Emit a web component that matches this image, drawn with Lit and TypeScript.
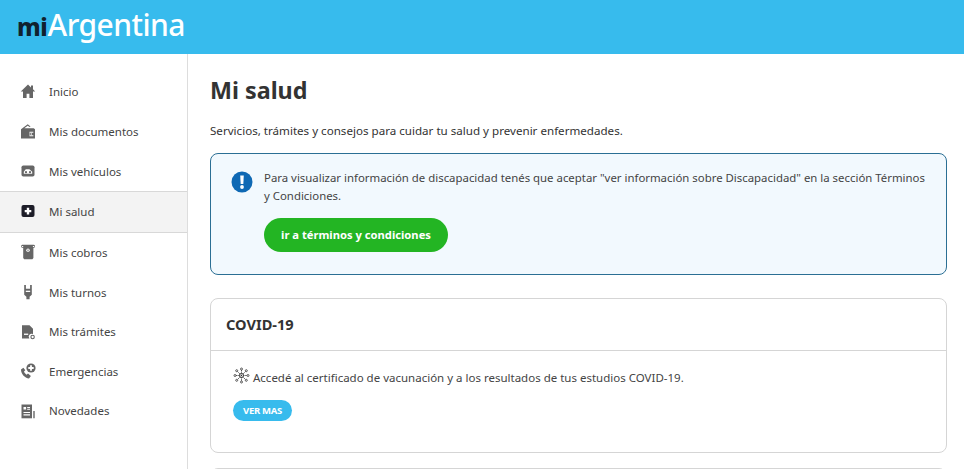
import { LitElement, html, css, svg } from "lit";
import { customElement } from "lit/decorators.js";

const icons: Record<string, unknown> = {
  home: svg`<path d="M8 1.500 .8 8.400h2.200V15h3.600v-4.300h2.800V15H13V8.400h2.200L13 6.300V2.500h-2v1.900z"/>`,
  docs: svg`<path d="M1 6.200 7.700 1.200l2.900 2.200-1 .7-1.900-1.400L4.300 5.200h9.400l1.300 1v9.300H1z"/><path fill="#fff" d="M9.500 8.800h3.800v.9H9.900v2.600h3.400v.9H9.500z"/><circle cx="11.300" cy="11" r=".8" fill="#fff"/>`,
  car: svg`<rect x="1.500" y="2.500" width="13" height="11" rx="1.800"/><path fill="#fff" d="M3.800 10.800V8.700l2-2.400h3.600l2.800 2.400v2.100z"/><circle cx="6" cy="9.200" r="1.100"/><circle cx="10" cy="9.200" r="1.100"/>`,
  health: svg`<rect x="1.500" y="2" width="13" height="12" rx="2"/><path fill="#fff" d="M6.800 4.800h2.400v2.100h2.100v2.400H9.200v2.100H6.800V9.300H4.700V6.900h2.100z"/>`,
  cash: svg`<path d="M3 .8h10.500A1.500 1.500 0 0 1 15 2.400c0 .9-.6 1.400-1.600 1.400V14l-1 1.200H4.200L3.200 14V3.800C1.900 3.800 1 3.300 1 2.400 1 1.500 1.800.8 3 .8z"/><path fill="#fff" d="M1.800 2.100h1.400v.9H1.800zM12.900 2.100h1.400v.9h-1.400z"/><circle cx="8" cy="6.300" r="1.700" fill="#fff"/><path d="M7.500 5.400h1v1.800h-1z"/>`,
  turns: svg`<path d="M4.200 1h1.700v3.800h4.200V1h1.700v9.800L9.600 12.800V15.300H6.400V12.800L4.200 10.800z"/><path fill="#fff" d="M5.800 6.700h4.400v1.300H5.800z"/>`,
  proc: svg`<path d="M2 1.200h7.500L13 4.700V10a3 3 0 0 0-3.600 4.600H2z"/><path fill="#fff" d="M4 9.600h4.200v1.300H4z"/><circle cx="12.600" cy="13" r="1.700" fill="none" stroke="#666" stroke-width="1.100"/>`,
  emerg: svg`<path d="M3.400 4.800 1 6.600c-.2 4 3.800 8.800 8 9l1.900-2.500-2.900-2.500-1.400 1.100c-1.100-.7-2.200-2-2.600-3.200l1.300-1.200z"/><circle cx="11" cy="5" r="4.600"/><path fill="#fff" d="M10.100 2.300h1.800v1.800h1.800v1.800h-1.800v1.800h-1.800V5.900H8.300V4.100h1.800z"/>`,
  news: svg`<path d="M1.500 1.500h10.500v13.800H1.500z"/><path fill="#fff" d="M3.500 4h2.600v2.600H3.500zM7.200 4H10v1H7.200zM7.200 5.800H10v1H7.200zM3.500 9H10v1.100H3.500zM3.500 11.300H10v1.100H3.500z"/><path d="M13.300 8h1.400v7.300h-1.400z"/>`,
};

const nav = [
  ["home", "Inicio"],
  ["docs", "Mis documentos"],
  ["car", "Mis vehículos"],
  ["health", "Mi salud"],
  ["cash", "Mis cobros"],
  ["turns", "Mis turnos"],
  ["proc", "Mis trámites"],
  ["emerg", "Emergencias"],
  ["news", "Novedades"],
];

@customElement("app-root")
export class AppRoot extends LitElement {
  static styles = css`
    :host {
      display: block;
      width: 964px;
      height: 469px;
      overflow: hidden;
      background: #fff;
      font-family: "Noto Sans", sans-serif;
      color: #333;
    }
    .top {
      height: 54px;
      background: #37bbed;
      display: flex;
      align-items: center;
      padding: 0 0 2px 17px;
      box-sizing: border-box;
    }
    .logo {
      font-size: 30px;
      line-height: 52px;
      color: #fff;
      display: flex;
      align-items: baseline;
      font-family: "Noto Sans", sans-serif;
      font-weight: 500;
      letter-spacing: -0.55px;
    }
    .logo b {
      color: #10222e;
      font-size: 24px;
      font-weight: 800;
      letter-spacing: -0.3px;
    }
    .body {
      display: flex;
      height: 415px;
    }
    .side {
      width: 188px;
      flex: none;
      box-sizing: border-box;
      border-right: 1px solid #ddd;
      padding-top: 17px;
    }
    .item {
      height: 40px;
      display: flex;
      align-items: center;
      padding-left: 20px;
      gap: 13px;
      font-size: 11.5px;
      color: #444;
      box-sizing: border-box;
    }
    .item.after {
      height: 39.6px;
    }
    .item.first-after {
      margin-top: -0.4px;
    }
    .item svg {
      width: 16px;
      height: 16px;
      fill: #666;
      flex: none;
    }
    .item.active {
      background: #f3f3f3;
      border-top: 1px solid #d8d8d8;
      border-bottom: 1px solid #d8d8d8;
      height: 42px;
      padding-bottom: 2px;
    }
    .item.active svg {
      fill: #1d1d28;
    }
    .main {
      flex: 1;
      padding: 0 17px 0 22px;
      min-width: 0;
    }
    h1 {
      margin: 20px 0 0;
      font-size: 23.3px;
      line-height: 32px;
      font-weight: 700;
      color: #333;
    }
    .lead {
      margin: 16px 0 0;
      font-size: 11.6px;
      line-height: 18px;
      color: #333;
    }
    .alert {
      margin-top: 13px;
      height: 122px;
      box-sizing: border-box;
      border: 1px solid #2b6f94;
      border-radius: 8px;
      background: #f2f9fe;
      display: flex;
      padding: 15px 16px 0 20px;
      gap: 11px;
    }
    .alert svg {
      width: 22px;
      height: 22px;
      flex: none;
      margin-top: 2px;
    }
    .alert p {
      margin: 0;
      font-size: 11.4px;
      line-height: 17.6px;
      color: #444;
    }
    .btn {
      display: inline-flex;
      align-items: center;
      justify-content: center;
      margin-top: 13.8px;
      width: 184px;
      height: 34px;
      border-radius: 17px;
      background: #23b523;
      color: #fff;
      font-size: 11.2px;
      font-weight: 700;
    }
    .card {
      margin-top: 23px;
      height: 155px;
      box-sizing: border-box;
      border: 1px solid #d5d5d5;
      border-radius: 8px;
    }
    .card h2 {
      margin: 0;
      height: 52px;
      box-sizing: border-box;
      border-bottom: 1px solid #d5d5d5;
      padding-left: 15px;
      font-size: 14.6px;
      line-height: 50px;
      font-weight: 700;
      color: #333;
    }
    .card .txt {
      display: flex;
      align-items: center;
      gap: 3px;
      margin: 18px 0 0 22px;
      font-size: 11.5px;
      line-height: 18px;
      color: #444;
    }
    .card svg {
      width: 17px;
      height: 17px;
      fill: none;
      stroke: #333;
      stroke-width: 0.8;
      margin-top: -6px;
    }
    .more {
      display: inline-flex;
      align-items: center;
      justify-content: center;
      margin: 13px 0 0 22px;
      width: 59px;
      height: 21px;
      border-radius: 11px;
      background: #37bbed;
      color: #fff;
      font-size: 9.5px;
      letter-spacing: -0.3px;
      font-weight: 700;
    }
    .next {
      margin-top: 15px;
      height: 20px;
      border: 1px solid #d5d5d5;
      border-radius: 8px 8px 0 0;
    }
  `;

  render() {
    return html`
      <header class="top">
        <div class="logo"><b>mi</b>Argentina</div>
      </header>
      <div class="body">
        <nav class="side">
          ${nav.map(
            ([icon, label], i) => html`
              <div class="item ${i === 3 ? "active" : ""} ${i > 3 ? "after" : ""} ${i === 4 ? "first-after" : ""}">
                <svg viewBox="0 0 16 16">${icons[icon]}</svg>
                <span>${label}</span>
              </div>
            `
          )}
        </nav>
        <main class="main">
          <h1>Mi salud</h1>
          <p class="lead">Servicios, trámites y consejos para cuidar tu salud y prevenir enfermedades.</p>
          <section class="alert">
            <svg viewBox="0 0 22 22">
              <circle cx="11" cy="11" r="10.500" fill="#0f69b4" />
              <path fill="#fff" d="M9.200 4.500h3.600l-.5 8.500H9.700z" />
              <circle cx="11" cy="16" r="1.900" fill="#fff" />
            </svg>
            <div>
              <p>Para visualizar información de discapacidad tenés que aceptar "ver información sobre Discapacidad" en la sección Términos y Condiciones.</p>
              <span class="btn">ir a términos y condiciones</span>
            </div>
          </section>
          <section class="card">
            <h2>COVID-19</h2>
            <div class="txt">
              <svg viewBox="0 0 17 17">
                <path stroke-dasharray="1.500 .8" d="M8.500 3v11M3 8.500h11M4.600 4.600l7.800 7.800M12.400 4.600l-7.800 7.800" />
                <circle cx="8.500" cy="8.500" r="2.200" />
                <circle cx="8.500" cy="2" r="1" /><circle cx="8.500" cy="15" r="1" />
                <circle cx="2" cy="8.500" r="1" /><circle cx="15" cy="8.500" r="1" />
                <circle cx="3.700" cy="3.700" r="1" /><circle cx="13.300" cy="3.700" r="1" />
                <circle cx="3.700" cy="13.300" r="1" /><circle cx="13.300" cy="13.300" r="1" />
              </svg>
              <span>Accedé al certificado de vacunación y a los resultados de tus estudios COVID-19.</span>
            </div>
            <span class="more">VER MAS</span>
          </section>
          <div class="next"></div>
        </main>
      </div>
    `;
  }
}
